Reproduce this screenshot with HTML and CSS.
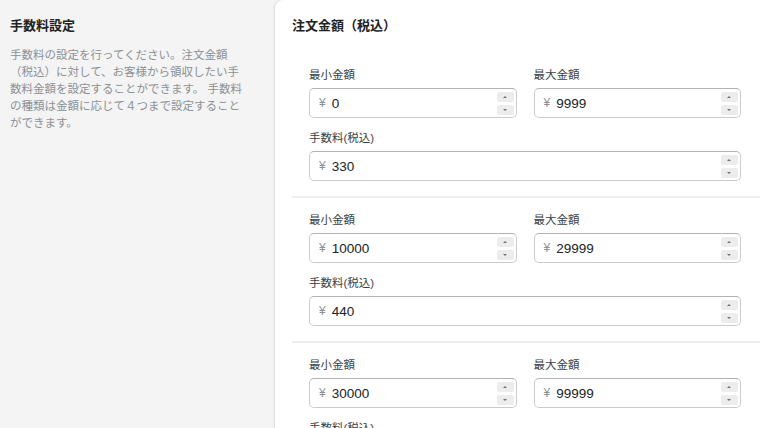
FILE: index.html
```html
<!DOCTYPE html>
<html lang="ja">
<head>
    <meta charset="UTF-8">
    <meta name="viewport" content="width=device-width, initial-scale=1.0">
    <title>手数料設定</title>
    <link rel="stylesheet" href="styles.css">
</head>
<body>
    <div class="layout">
        <aside class="intro">
            <h2>手数料設定</h2>
            <p>手数料の設定を行ってください。注文金額（税込）に対して、お客様から領収したい手数料金額を設定することができます。 手数料の種類は金額に応じて４つまで設定することができます。</p>
        </aside>

        <main class="card">
            <h3 class="card-title">注文金額（税込）</h3>

            <div class="tier">
                <div class="row">
                    <div class="form-group">
                        <label>最小金額</label>
                        <div class="field"><span class="yen">¥</span><input type="text" value="0"><div class="spin"><span class="up"></span><span class="down"></span></div></div>
                    </div>
                    <div class="form-group">
                        <label>最大金額</label>
                        <div class="field"><span class="yen">¥</span><input type="text" value="9999"><div class="spin"><span class="up"></span><span class="down"></span></div></div>
                    </div>
                </div>
                <div class="form-group">
                    <label>手数料(税込)</label>
                    <div class="field"><span class="yen">¥</span><input type="text" value="330"><div class="spin"><span class="up"></span><span class="down"></span></div></div>
                </div>
            </div>

            <div class="tier">
                <div class="row">
                    <div class="form-group">
                        <label>最小金額</label>
                        <div class="field"><span class="yen">¥</span><input type="text" value="10000"><div class="spin"><span class="up"></span><span class="down"></span></div></div>
                    </div>
                    <div class="form-group">
                        <label>最大金額</label>
                        <div class="field"><span class="yen">¥</span><input type="text" value="29999"><div class="spin"><span class="up"></span><span class="down"></span></div></div>
                    </div>
                </div>
                <div class="form-group">
                    <label>手数料(税込)</label>
                    <div class="field"><span class="yen">¥</span><input type="text" value="440"><div class="spin"><span class="up"></span><span class="down"></span></div></div>
                </div>
            </div>

            <div class="tier">
                <div class="row">
                    <div class="form-group">
                        <label>最小金額</label>
                        <div class="field"><span class="yen">¥</span><input type="text" value="30000"><div class="spin"><span class="up"></span><span class="down"></span></div></div>
                    </div>
                    <div class="form-group">
                        <label>最大金額</label>
                        <div class="field"><span class="yen">¥</span><input type="text" value="99999"><div class="spin"><span class="up"></span><span class="down"></span></div></div>
                    </div>
                </div>
                <div class="form-group">
                    <label>手数料(税込)</label>
                    <div class="field"><span class="yen">¥</span><input type="text" value="550"><div class="spin"><span class="up"></span><span class="down"></span></div></div>
                </div>
            </div>
        </main>
    </div>
</body>
</html>
```
FILE: styles.css
```css
* {
    margin: 0;
    padding: 0;
    box-sizing: border-box;
    font-family: 'Liberation Sans', 'Noto Sans CJK JP', sans-serif;
}

body {
    background: #f4f4f4;
    height: 428px;
    overflow: hidden;
}

.layout {
    display: flex;
    align-items: flex-start;
}

.intro {
    width: 275px;
    flex-shrink: 0;
    padding: 16px 10px;
}

.intro h2 {
    font-size: 13px;
    font-weight: 700;
    line-height: 20px;
    color: #202223;
    margin-bottom: 11px;
}

.intro p {
    width: 238px;
    font-size: 11.5px;
    line-height: 17px;
    color: #8c9196;
}

.card {
    flex: 1;
    min-width: 0;
    background: #fff;
    border-radius: 8px 0 0 0;
    box-shadow: -1px 0 2px rgba(0, 0, 0, 0.08), 0 0 0 1px #ececec;
    padding: 16px 0 40px 17px;
    min-height: 428px;
}

.card-title {
    font-size: 13px;
    font-weight: 700;
    line-height: 20px;
    color: #202223;
    margin-bottom: 17px;
}

.tier {
    padding: 14px 19px 15px 17px;
    border-bottom: 2px solid #eeeeee;
}

.row {
    display: grid;
    grid-template-columns: minmax(0, 1fr) minmax(0, 1fr);
    gap: 17px;
    margin-bottom: 12px;
}

label {
    display: block;
    font-size: 11.5px;
    line-height: 16px;
    color: #3b3f43;
    margin-bottom: 5px;
}

.field {
    height: 30px;
    border: 1px solid #c9cccf;
    border-top-color: #aeb4b9;
    border-radius: 5px;
    display: flex;
    align-items: center;
    padding: 0 2px 0 9px;
}

.yen {
    font-size: 12px;
    color: #8c9196;
    margin-right: 6px;
}

.field input {
    flex: 1;
    width: 0;
    min-width: 0;
    border: none;
    outline: none;
    background: transparent;
    font-size: 13.5px;
    color: #202223;
}

.spin {
    width: 17px;
    flex-shrink: 0;
    display: flex;
    flex-direction: column;
    gap: 3px;
}

.spin span {
    height: 10px;
    background: #ececec;
    border-radius: 2px;
    position: relative;
}

.spin span::after {
    content: '';
    position: absolute;
    left: 6px;
    top: 4px;
    border-left: 2.5px solid transparent;
    border-right: 2.5px solid transparent;
}

.spin .up::after {
    border-bottom: 2.5px solid #6d7175;
}

.spin .down::after {
    border-top: 2.5px solid #6d7175;
}
```
